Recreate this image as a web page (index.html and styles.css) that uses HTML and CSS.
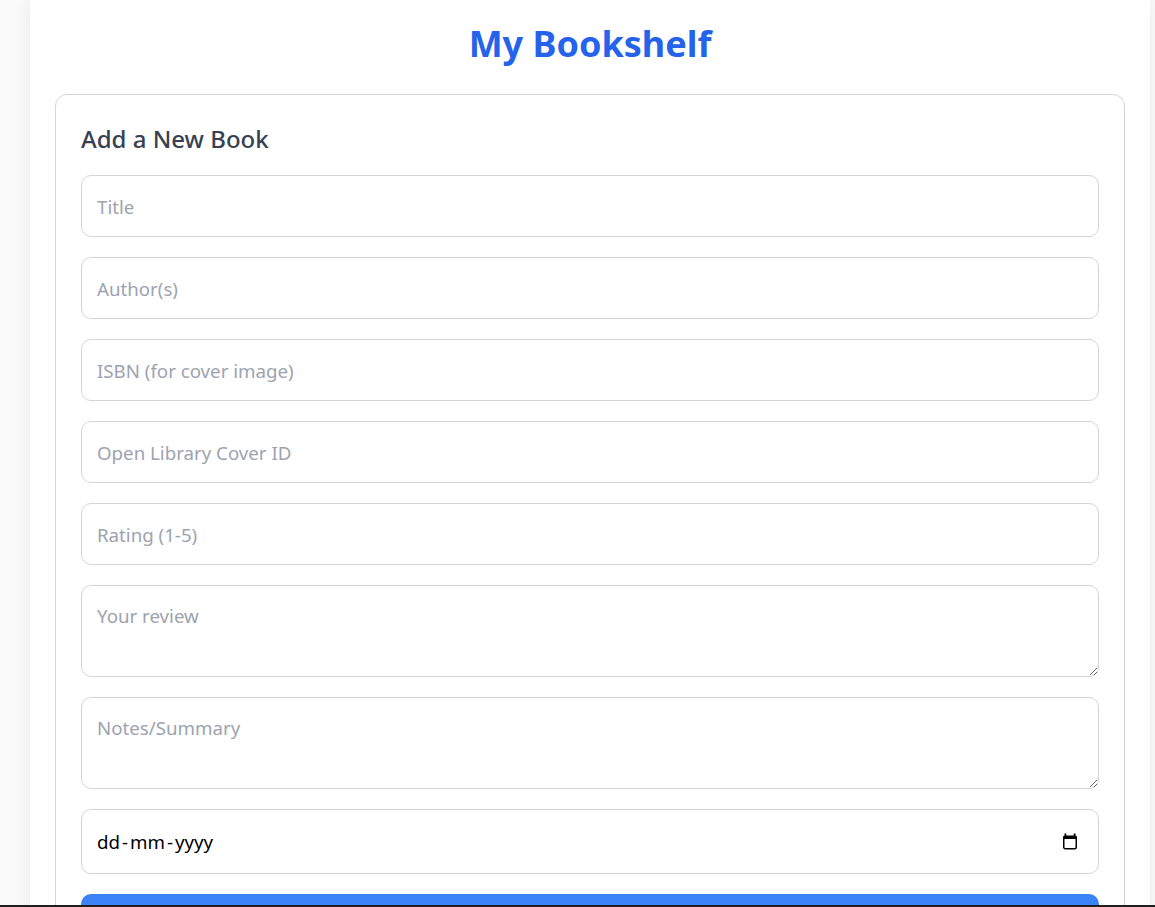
FILE: index.html
```html
<!DOCTYPE html>
<html lang="en">
<head>
<meta charset="utf-8">
<title>My Bookshelf</title>
<link rel="stylesheet" href="styles.css">
</head>
<body>
<div class="page">
  <main class="container">
    <h1 class="title">My Bookshelf</h1>
    <section class="card">
      <h2 class="card-title">Add a New Book</h2>
      <form class="book-form">
        <input class="field" type="text" placeholder="Title">
        <input class="field" type="text" placeholder="Author(s)">
        <input class="field" type="text" placeholder="ISBN (for cover image)">
        <input class="field" type="text" placeholder="Open Library Cover ID">
        <input class="field" type="text" placeholder="Rating (1-5)">
        <textarea class="field area" placeholder="Your review"></textarea>
        <textarea class="field area" placeholder="Notes/Summary"></textarea>
        <div class="field date">
          <span class="date-text">dd<span class="sep">-</span>mm<span class="sep">-</span>yyyy</span>
          <svg class="cal" width="16" height="17" viewBox="0 0 16 17" aria-hidden="true">
            <rect x="1.75" y="3.25" width="12.5" height="12.5" rx="1.5" fill="none" stroke="#000" stroke-width="1.5"/>
            <rect x="1.5" y="3" width="13" height="3" fill="#000"/>
            <rect x="2.5" y="0.5" width="1.8" height="3" fill="#000"/>
            <rect x="11.7" y="0.5" width="1.8" height="3" fill="#000"/>
          </svg>
        </div>
        <button class="submit" type="button">Add Book</button>
      </form>
    </section>
  </main>
</div>
<div class="bottom-line"></div>
</body>
</html>
```

FILE: styles.css
```css
* { box-sizing: border-box; }

html, body {
  margin: 0;
  background: #fafafa;
  font-family: "Segoe UI", "Noto Sans", "Open Sans", sans-serif;
}

.page {
  padding-left: 30px;
}

.container {
  width: 1120px;
  background: #ffffff;
  box-shadow: 0 0 18px rgba(0, 0, 0, 0.07);
  padding: 22px 25px 40px;
  min-height: 907px;
}

.title {
  margin: 0 0 28px;
  text-align: center;
  color: #2563eb;
  font-size: 36px;
  line-height: 44px;
  font-weight: 700;
}

.card {
  border: 1px solid #d4d4dc;
  border-radius: 12px;
  padding: 25px;
}

.card-title {
  margin: 3px 0 20px;
  font-size: 24px;
  line-height: 32px;
  font-weight: 500;
  color: #374151;
}

.book-form {
  display: flex;
  flex-direction: column;
  gap: 20px;
}

.field {
  display: block;
  width: 100%;
  height: 62px;
  border: 1px solid #d1d5db;
  border-radius: 10px;
  padding: 18px 15px;
  font-family: inherit;
  font-size: 18.7px;
  line-height: 24px;
  color: #111827;
  background: #fff;
  outline: none;
}

.field::placeholder {
  color: #9ca3af;
}

.area {
  height: 92px;
  resize: vertical;
}

.date {
  height: 65px;
  display: flex;
  align-items: center;
  justify-content: space-between;
  padding: 0 20px 0 15px;
  color: #000;
}

.date-text {
  font-size: 18.7px;
}

.sep {
  margin: 0 2px;
}

.cal {
  display: block;
}

.submit {
  height: 60px;
  border: none;
  border-radius: 10px;
  background: #3b82f6;
  color: #fff;
  font-family: inherit;
  font-size: 18px;
  font-weight: 600;
}

.bottom-line {
  position: fixed;
  left: 0;
  right: 0;
  bottom: 0;
  height: 2px;
  background: #1f1f1f;
}
```
